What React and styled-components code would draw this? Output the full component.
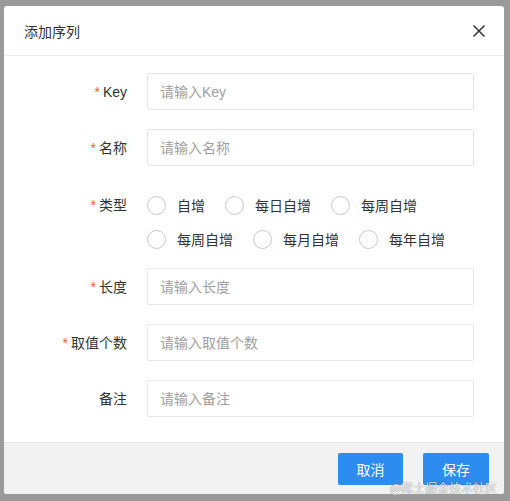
import React from "react";
import styled, { createGlobalStyle } from "styled-components";

const GlobalStyle = createGlobalStyle`
    body {
        margin: 0;
        background-color: #9a9a9a;
        font-family: "Liberation Sans", "Noto Sans CJK SC", sans-serif;
    }
`;

const Page = styled.div`
    width: 510px;
    height: 501px;
    padding: 6px 6px 0 4px;
    box-sizing: border-box;
    position: relative;
`;
const Dialog = styled.div`
    width: 500px;
    height: 488px;
    background-color: #fff;
    border-radius: 3px;
    display: flex;
    flex-direction: column;
    overflow: hidden;
`;
const Header = styled.div`
    height: 50px;
    display: flex;
    align-items: center;
    justify-content: space-between;
    padding: 0 18px 0 20px;
    border-bottom: 1px solid #ececec;
    box-sizing: border-box;
`;
const Title = styled.div`
    font-size: 14px;
    color: #333;
`;
const CloseButton = styled.button`
    background: transparent;
    border: 0;
    padding: 0;
    width: 14px;
    height: 14px;
    display: flex;
    cursor: pointer;
`;
const Body = styled.div`
    flex: 1;
    padding: 17px 30px 0 23px;
    display: flex;
    flex-direction: column;
    gap: 19px;
`;
const Row = styled.div`
    display: flex;
    align-items: ${props => props.top ? "flex-start" : "center"};
    margin-top: ${props => props.mt || 0}px;
    margin-bottom: ${props => props.mb || 0}px;
`;
const Label = styled.div`
    width: 100px;
    margin-right: 20px;
    text-align: right;
    font-size: 14px;
    color: #333;
    line-height: ${props => props.lh || 20}px;
    flex-shrink: 0;
`;
const Star = styled.span`
    color: #f2622b;
    margin-right: 3px;
`;
const Input = styled.input`
    flex: 1;
    height: 37px;
    box-sizing: border-box;
    border: 1px solid #e6e6e6;
    border-radius: 2px;
    padding: 0 12px;
    font-size: 14px;
    font-family: inherit;
    color: #333;
    outline: none;
    &::placeholder {
        color: #a0a0a0;
    }
`;
const RadioGroup = styled.div`
    display: flex;
    flex-direction: column;
`;
const RadioRow = styled.div`
    display: flex;
    height: 34px;
    align-items: center;
    gap: 20px;
`;
const RadioItem = styled.label`
    display: flex;
    align-items: center;
    gap: 11px;
    font-size: 14px;
    color: #333;
    cursor: pointer;
`;
const Circle = styled.span`
    width: 19px;
    height: 19px;
    box-sizing: border-box;
    border: 1.5px solid #c8c8c8;
    border-radius: 50%;
`;
const Footer = styled.div`
    height: 52px;
    background-color: #f2f2f2;
    border-top: 1px solid #e3e3e3;
    box-sizing: border-box;
    display: flex;
    align-items: center;
    justify-content: flex-end;
    gap: 20px;
    padding: 0 15px 0 0;
`;
const Button = styled.button`
    height: 32px;
    width: ${props => props.w}px;
    border: 0;
    border-radius: 2px;
    background-color: #2d8cf0;
    color: #fff;
    font-size: 14px;
    font-family: inherit;
    cursor: pointer;
`;
const Watermark = styled.div`
    position: absolute;
    right: 13px;
    bottom: 6px;
    font-size: 12px;
    line-height: 14px;
    color: rgba(255, 255, 255, 0.85);
    text-shadow: 0 0 1px rgba(0, 0, 0, 0.6);
    font-family: "Noto Sans CJK SC", sans-serif;
`;

const fields = [
    { key: "key", label: "Key", required: true, placeholder: "请输入Key" },
    { key: "name", label: "名称", required: true, placeholder: "请输入名称" },
];
const fields2 = [
    { key: "len", label: "长度", required: true, placeholder: "请输入长度" },
    { key: "count", label: "取值个数", required: true, placeholder: "请输入取值个数" },
    { key: "remark", label: "备注", required: false, placeholder: "请输入备注" },
];

const radios = [
    ["自增", "每日自增", "每周自增"],
    ["每周自增", "每月自增", "每年自增"],
];

function Field({ label, required, placeholder }) {
    return (
        <Row>
            <Label>{required && <Star>*</Star>}{label}</Label>
            <Input placeholder={placeholder} />
        </Row>
    );
}

export default function App() {
    return (
        <Page>
            <GlobalStyle />
            <Dialog>
                <Header>
                    <Title>添加序列</Title>
                    <CloseButton>
                        <svg width="14" height="14" viewBox="0 0 14 14">
                            <path d="M1.5 1.5 L12.5 12.5 M12.5 1.5 L1.5 12.5" stroke="#333" strokeWidth="1.5" />
                        </svg>
                    </CloseButton>
                </Header>
                <Body>
                    {fields.map(f => <Field key={f.key} {...f} />)}
                    <Row top mt={3} mb={-7}>
                        <Label lh={34}><Star>*</Star>类型</Label>
                        <RadioGroup>
                            {radios.map((row, i) => (
                                <RadioRow key={i}>
                                    {row.map(r => (
                                        <RadioItem key={r}><Circle />{r}</RadioItem>
                                    ))}
                                </RadioRow>
                            ))}
                        </RadioGroup>
                    </Row>
                    {fields2.map(f => <Field key={f.key} {...f} />)}
                </Body>
                <Footer>
                    <Button w={65}>取消</Button>
                    <Button w={66}>保存</Button>
                </Footer>
            </Dialog>
            <Watermark>@稀土掘金技术社区</Watermark>
        </Page>
    );
}
